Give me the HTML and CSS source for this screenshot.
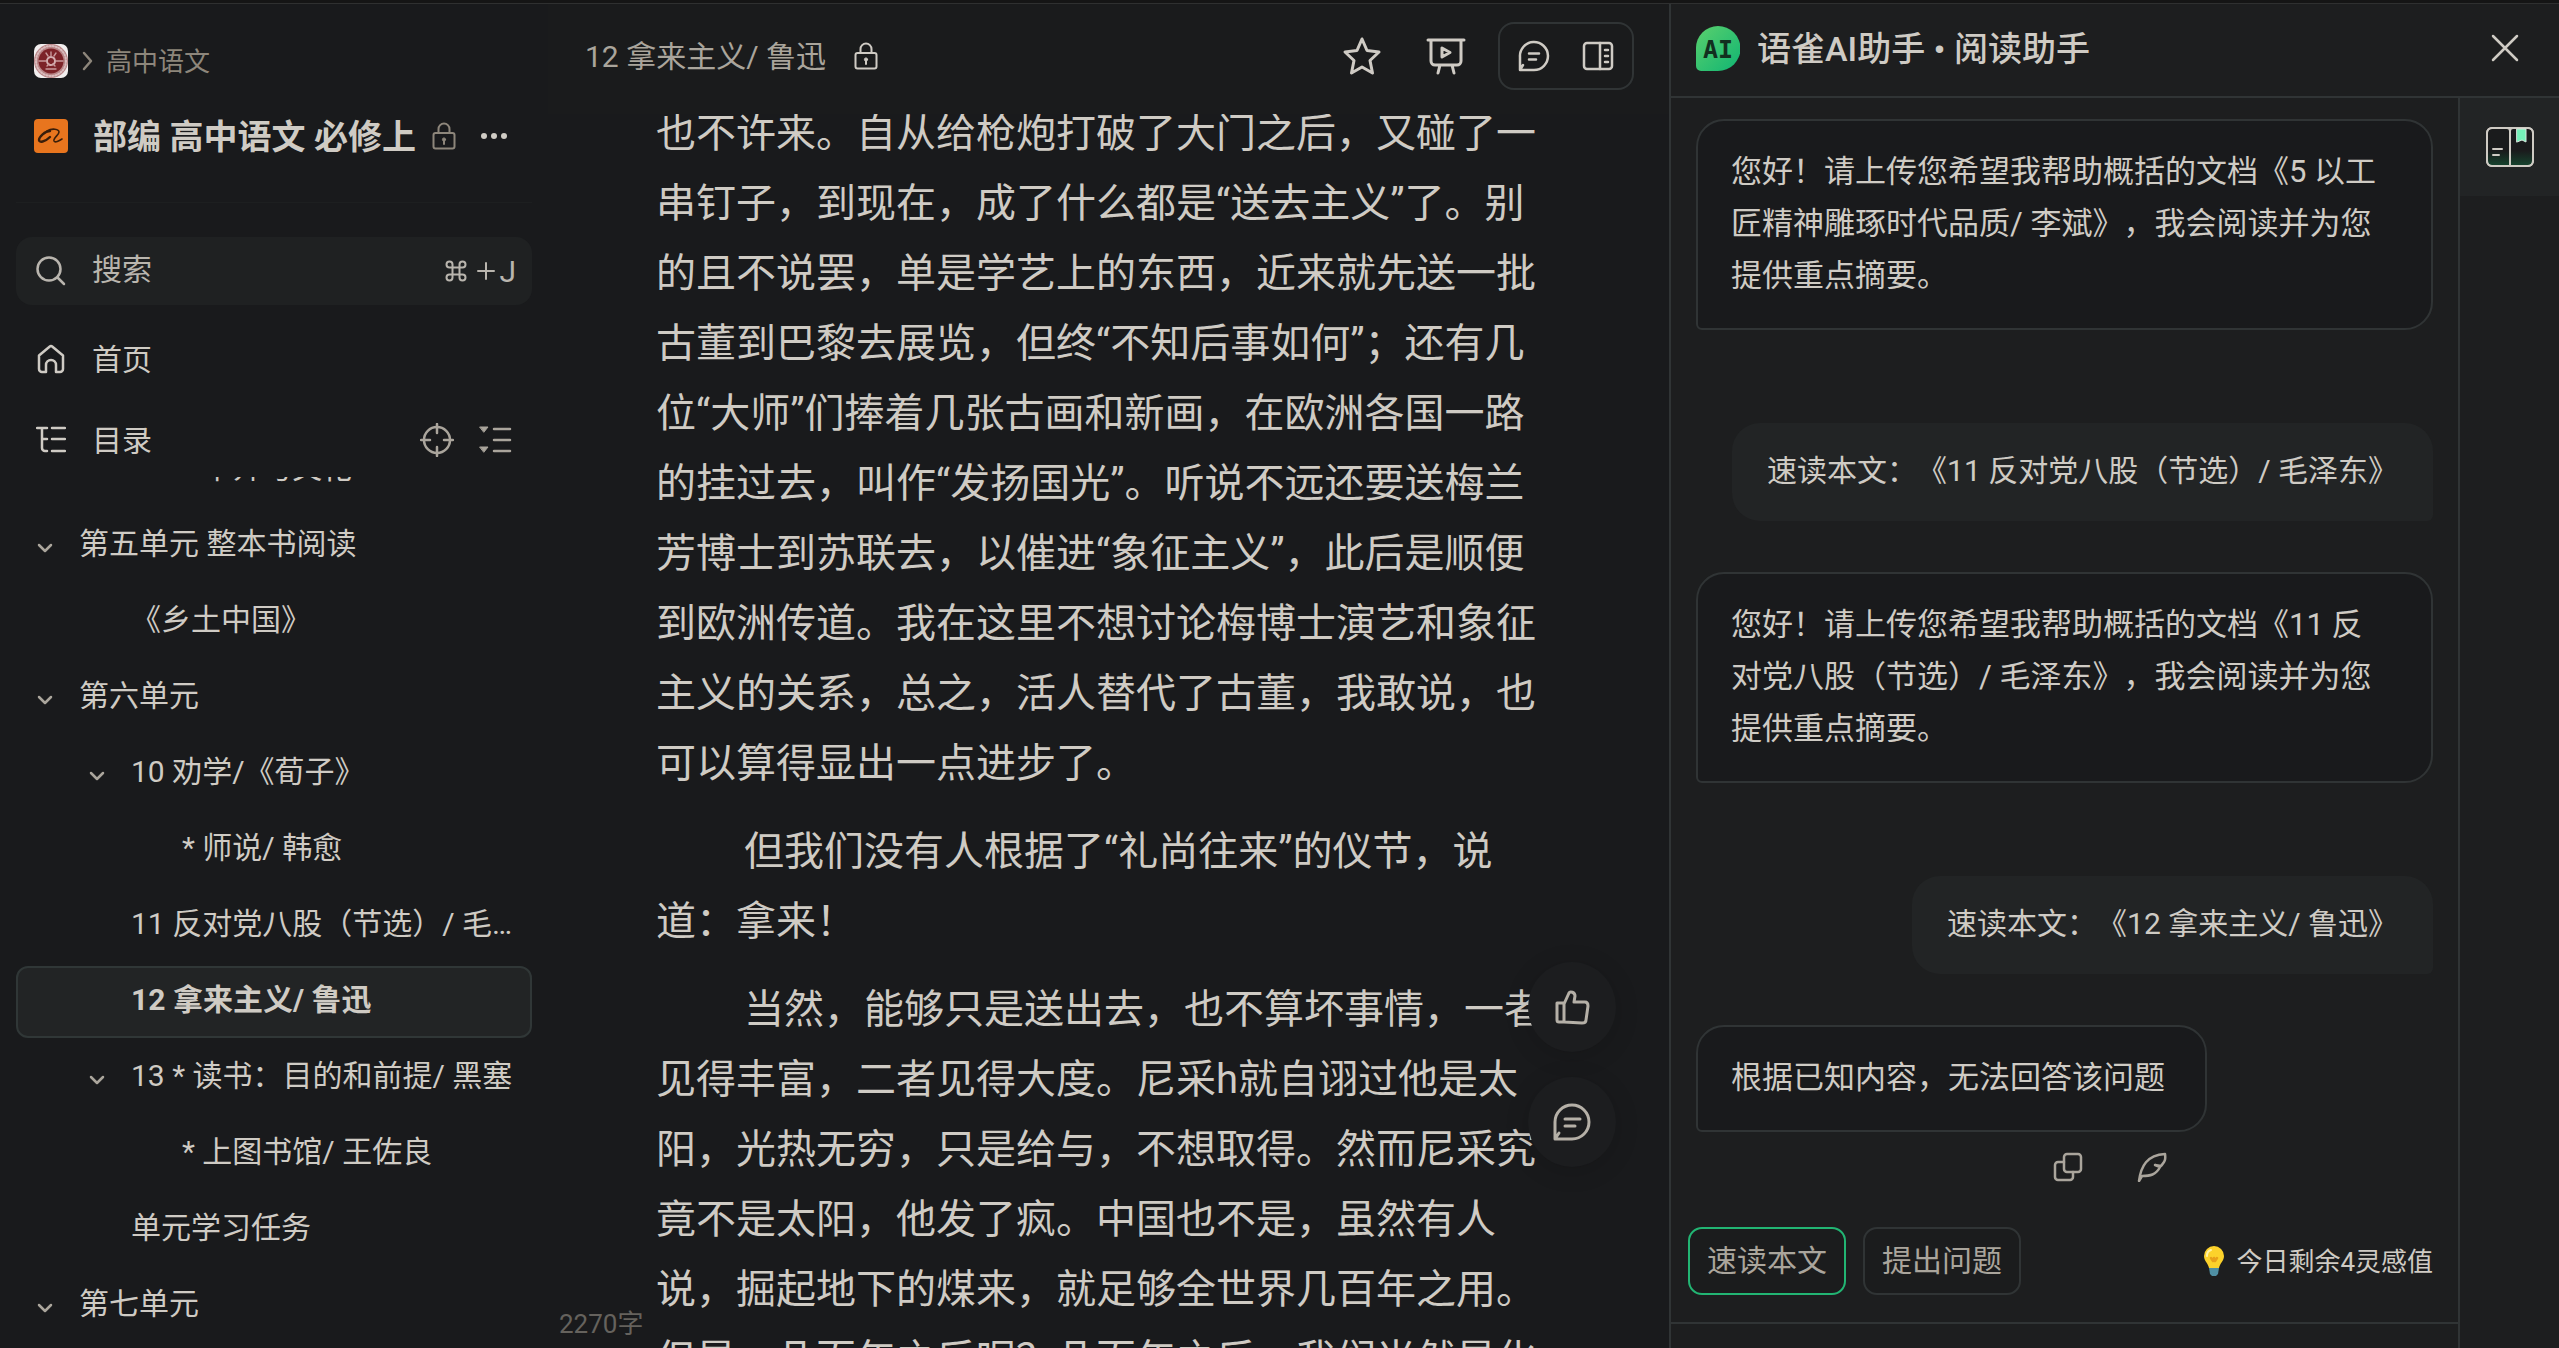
FILE: index.html
```html
<!DOCTYPE html>
<html lang="zh-CN">
<head>
  <meta charset="UTF-8">
  <title>12 拿来主义/ 鲁迅</title>
  <link rel="stylesheet" href="styles.css">
</head>
<body>
  <div class="window-edge"></div>
  <div class="app">

    <aside class="sidebar">
      <nav class="crumb">
        <svg class="avatar" viewBox="0 0 34 34">
          <rect width="34" height="34" rx="7" fill="#f1eeee"/>
          <circle cx="17" cy="17" r="17" fill="#b98587"/>
          <circle cx="17" cy="17" r="15" fill="none" stroke="#d9bcbd" stroke-width="2" stroke-dasharray="1 2"/>
          <circle cx="17" cy="17" r="12.500" fill="#7c2328"/>
          <circle cx="17" cy="17" r="4" fill="none" stroke="#d3adaf" stroke-width="2" stroke-dasharray="2 1"/>
          <path d="M5 17h7M22 17h7M12 9l2 3M17 8v4M22 9l-2 3M12 25h10M13 22l2-2M21 22l-2-2" stroke="#c99a9c" stroke-width="1.400" fill="none"/>
        </svg>
        <svg class="crumb-arrow" viewBox="0 0 12 20"><path d="M2 2l7 8-7 8"/></svg>
        <a href="#">高中语文</a>
      </nav>

      <div class="book">
        <svg class="book-logo" viewBox="0 0 34 34">
          <rect width="34" height="34" rx="4" fill="#e8751e"/>
          <path d="M16 12C11 12 5 18 5 21c0 3 6 2 11-3" fill="none" stroke="#3a1e0a" stroke-width="2.400" stroke-linecap="round"/>
          <path d="M13 12c5-3 12-2 12 1 0 3-6 6-5 9 1 2 5 0 8-2" fill="none" stroke="#3a1e0a" stroke-width="1.600" stroke-linecap="round"/>
        </svg>
        <a class="book-name" href="#">部编 高中语文 必修上</a>
        <svg class="lock" viewBox="0 0 24 28"><rect x="1.500" y="11" width="21" height="15.500" rx="2"/><path d="M6.500 11V7a5.500 5.500 0 0 1 11 0v4M12 18v4"/><circle class="fill" cx="12" cy="17.500" r="1.600"/></svg>
        <button class="icon-btn more" type="button" aria-label="更多">
          <svg viewBox="0 0 28 8"><circle cx="4" cy="4" r="3"/><circle cx="14" cy="4" r="3"/><circle cx="24" cy="4" r="3"/></svg>
        </button>
      </div>

      <label class="search">
        <svg viewBox="0 0 30 30"><circle cx="13" cy="13" r="11.500"/><path d="M21.500 21.500L28 28"/></svg>
        <input type="text" placeholder="搜索" aria-label="搜索">
        <svg class="cmd" viewBox="0 0 22 22"><path d="M7.500 7.500h7v7h-7zM7.500 7.500V4.500a3 3 0 1 0-3 3h3zM14.500 7.500h3a3 3 0 1 0-3-3v3zM14.500 14.500v3a3 3 0 1 0 3-3h-3zM7.500 14.500h-3a3 3 0 1 0 3 3v-3z"/></svg>
        <svg class="plus" viewBox="0 0 18 18"><path d="M9 1v16M1 9h16"/></svg>
        <kbd>J</kbd>
      </label>

      <a class="side-row" href="#">
        <svg viewBox="0 0 30 30"><path d="M3 11.500L13.500 2.700a2.300 2.300 0 0 1 3 0L27 11.500V25a3 3 0 0 1-3 3h-4v-7a5 5 0 0 0-10 0v7H6a3 3 0 0 1-3-3z"/></svg>
        <span>首页</span>
      </a>
      <div class="side-row toc-head">
        <svg viewBox="0 0 30 30"><path d="M1 3h10M16 3h13M6 3v20a3 3 0 0 0 3 3h2M6 14h5M16 14h13M16 26h13"/></svg>
        <span>目录</span>
        <button class="icon-btn" type="button" aria-label="定位">
          <svg viewBox="0 0 34 34"><circle cx="17" cy="17" r="13"/><path d="M17 1v9M17 24v9M1 17h9M24 17h9"/></svg>
        </button>
        <button class="icon-btn" type="button" aria-label="展开">
          <svg viewBox="0 0 34 34"><path d="M16 6h16M16 17h16M16 28h16"/><path class="fill" d="M2 4h8l-4 5zM2 24h8l-4 5z"/></svg>
        </button>
      </div>

      <div class="tree">
        <ul class="level-1">
          <li>
            <ul class="level-3">
              <li><a href="#">* 中介与文化</a></li>
            </ul>
          </li>
          <li>
            <a href="#"><svg class="caret" viewBox="0 0 16 10"><path d="M2 2l6 6 6-6"/></svg>第五单元 整本书阅读</a>
            <ul class="level-2">
              <li><a href="#">《乡土中国》</a></li>
            </ul>
          </li>
          <li>
            <a href="#"><svg class="caret" viewBox="0 0 16 10"><path d="M2 2l6 6 6-6"/></svg>第六单元</a>
            <ul class="level-2">
              <li>
                <a href="#"><svg class="caret" viewBox="0 0 16 10"><path d="M2 2l6 6 6-6"/></svg>10 劝学/《荀子》</a>
                <ul class="level-3">
                  <li><a href="#">* 师说/ 韩愈</a></li>
                </ul>
              </li>
              <li><a href="#">11 反对党八股（节选）/ 毛泽东</a></li>
              <li><a class="active" href="#">12 拿来主义/ 鲁迅</a></li>
              <li>
                <a href="#"><svg class="caret" viewBox="0 0 16 10"><path d="M2 2l6 6 6-6"/></svg>13 * 读书：目的和前提/ 黑塞</a>
                <ul class="level-3">
                  <li><a href="#">* 上图书馆/ 王佐良</a></li>
                </ul>
              </li>
              <li><a href="#">单元学习任务</a></li>
            </ul>
          </li>
          <li><a href="#"><svg class="caret" viewBox="0 0 16 10"><path d="M2 2l6 6 6-6"/></svg>第七单元</a></li>
        </ul>
      </div>
    </aside>

    <main class="doc">
      <header class="doc-header">
        <h1>12 拿来主义/ 鲁迅</h1>
        <svg class="lock" viewBox="0 0 24 28"><rect x="1.500" y="11" width="21" height="15.500" rx="2"/><path d="M6.500 11V7a5.500 5.500 0 0 1 11 0v4M12 18v4"/><circle class="fill" cx="12" cy="17.500" r="1.600"/></svg>
        <div class="doc-tools">
          <button class="icon-btn" type="button" aria-label="收藏">
            <svg viewBox="0 0 40 40"><path d="M20 3l5 11.500 12 1.500-9 8.500 2.500 12.500L20 31 9.500 37 12 24.500 3 16l12-1.500z"/></svg>
          </button>
          <button class="icon-btn" type="button" aria-label="演示">
            <svg viewBox="0 0 40 40"><path d="M2 4h36M5 4v21a4 4 0 0 0 4 4h22a4 4 0 0 0 4-4V4M14 29l-2 8M26 29l2 8M16 12v9l8-4.500z"/></svg>
          </button>
          <div class="tool-group">
            <button class="icon-btn" type="button" aria-label="评论">
              <svg viewBox="0 0 32 32"><path d="M2 30V17A14 14 0 1 1 16 30H2l3-5M11 13.500h10M11 19.500h7"/></svg>
            </button>
            <button class="icon-btn" type="button" aria-label="侧栏">
              <svg viewBox="0 0 32 32"><rect x="2" y="3" width="28" height="26" rx="3"/><path d="M18 3v26M23 10h3M23 16h3M23 22h3"/></svg>
            </button>
          </div>
        </div>
      </header>

      <div class="doc-body">
        <article class="prose">
          <p>也不许来。自从给枪炮打破了大门之后，又碰了一串钉子，到现在，成了什么都是“送去主义”了。别的且不说罢，单是学艺上的东西，近来就先送一批古董到巴黎去展览，但终“不知后事如何”；还有几位“大师”们捧着几张古画和新画，在欧洲各国一路的挂过去，叫作“发扬国光”。听说不远还要送梅兰芳博士到苏联去，以催进“象征主义”，此后是顺便到欧洲传道。我在这里不想讨论梅博士演艺和象征主义的关系，总之，活人替代了古董，我敢说，也可以算得显出一点进步了。</p>
          <p class="indent">但我们没有人根据了“礼尚往来”的仪节，说道：拿来！</p>
          <p class="indent">当然，能够只是送出去，也不算坏事情，一者见得丰富，二者见得大度。尼采h就自诩过他是太阳，光热无穷，只是给与，不想取得。然而尼采究竟不是太阳，他发了疯。中国也不是，虽然有人说，掘起地下的煤来，就足够全世界几百年之用。但是，几百年之后呢？几百年之后，我们当然是化</p>
        </article>
        <div class="float-tools">
          <button class="float-btn" type="button" aria-label="点赞">
            <svg viewBox="0 0 38 38"><path d="M4 15h7v19H6a2 2 0 0 1-2-2zM11 16l5-11c1-2 6-1 6 3l-1 6h11c2 0 3 2 3 4l-2 14c0 2-2 3-4 3l-18-1"/></svg>
          </button>
          <button class="float-btn" type="button" aria-label="评论">
            <svg viewBox="0 0 38 38"><path d="M2 36V19A17 17 0 1 1 19 36H2l4-6M12 16h15M12 23h10"/></svg>
          </button>
        </div>
        <div class="word-count">2270字</div>
      </div>
    </main>

    <section class="assistant">
      <header class="assistant-header">
        <svg class="ai-logo" viewBox="0 0 44 45">
          <defs><linearGradient id="ai" x1="0" y1="0" x2="1" y2="1"><stop offset="0" stop-color="#5bd06d"/><stop offset="1" stop-color="#10b573"/></linearGradient></defs>
          <path d="M22 0a22 22 0 0 1 0 45H5a5 5 0 0 1-5-5V22A22 22 0 0 1 22 0z" fill="url(#ai)"/>
          <text x="22" y="32">AI</text>
        </svg>
        <h2>语雀AI助手 • 阅读助手</h2>
        <button class="icon-btn close" type="button" aria-label="关闭">
          <svg viewBox="0 0 28 28"><path d="M2 2l24 24M26 2L2 26"/></svg>
        </button>
      </header>

      <div class="assistant-main">
        <div class="chat">
          <div class="messages">
            <div class="msg bot">您好！请上传您希望我帮助概括的文档《5 以工匠精神雕琢时代品质/ 李斌》，我会阅读并为您提供重点摘要。</div>
            <div class="msg user">速读本文：《11 反对党八股（节选）/ 毛泽东》</div>
            <div class="msg bot">您好！请上传您希望我帮助概括的文档《11 反对党八股（节选）/ 毛泽东》，我会阅读并为您提供重点摘要。</div>
            <div class="msg user">速读本文：《12 拿来主义/ 鲁迅》</div>
            <div class="answer">
              <div class="msg bot">根据已知内容，无法回答该问题</div>
              <div class="msg-actions">
                <button class="icon-btn" type="button" aria-label="复制">
                  <svg viewBox="0 0 30 30"><rect x="11" y="2" width="17" height="18" rx="3"/><path d="M11 10H5a3 3 0 0 0-3 3v12a3 3 0 0 0 3 3h12a3 3 0 0 0 3-3v-5"/></svg>
                </button>
                <button class="icon-btn" type="button" aria-label="插入">
                  <svg viewBox="0 0 30 30"><path d="M2 29C4 14 10 3 28 2c1 7-1 8-4 12l-6-1 5 2c-4 8-10 9-18 9z"/></svg>
                </button>
              </div>
            </div>
          </div>
          <div class="prompt-bar">
            <button class="prompt selected" type="button">速读本文</button>
            <button class="prompt" type="button">提出问题</button>
            <div class="quota">
              <svg viewBox="0 0 20 30">
                <path d="M10 0a10 10 0 0 1 10 10c0 5-4 7-5 12H5C4 17 0 15 0 10A10 10 0 0 1 10 0z" fill="#fcd22b"/>
                <path d="M7 4a6 6 0 0 0-4 6" stroke="#fff3a8" stroke-width="2" fill="none"/>
                <path d="M7 12l2 3 1-3 1 3 2-3" stroke="#e8a11a" fill="none"/>
                <path d="M5 22h10l-1 6-2 2H8l-2-2z" fill="#4f8fa3"/>
              </svg>
              <span>今日剩余4灵感值</span>
            </div>
          </div>
        </div>
        <nav class="rail">
          <button class="rail-tab" type="button" aria-label="阅读助手">
            <svg viewBox="0 0 48 40">
              <defs><linearGradient id="book" x1="0" y1="0" x2="0" y2="1"><stop offset="0.600" stop-color="#1a1b1c"/><stop offset="1" stop-color="#16452f"/></linearGradient></defs>
              <rect x="1" y="1" width="46" height="38" rx="5" fill="url(#book)"/>
              <path d="M6 1h15a3 3 0 0 1 3 3 3 3 0 0 1 3-3h15a5 5 0 0 1 5 5v28a5 5 0 0 1-5 5H6a5 5 0 0 1-5-5V6a5 5 0 0 1 5-5zM24 4v35"/>
              <path d="M7 22h9M7 28h6"/>
              <path class="mark" d="M31 2h9v13l-4-2-5 2z"/>
            </svg>
          </button>
        </nav>
      </div>
    </section>
  </div>
</body>
</html>
```

FILE: styles.css
```css
:root {
  --bg: #191a1c;
  --panel: #1d1e1f;
  --raised: #222425;
  --field: #1f2122;
  --line: #303435;
  --text: #cfcbc4;
  --muted: #aaa59c;
  --dim: #8d867b;
  --green: #22b573;
}

* {
  box-sizing: border-box;
}

body {
  margin: 0;
  height: 100vh;
  display: flex;
  flex-direction: column;
  overflow: hidden;
  background: var(--bg);
  color: var(--text);
  font-family: Roboto, "Noto Sans CJK SC", sans-serif;
  font-size: 30px;
  text-spacing-trim: space-all;
}

button,
input,
kbd {
  font: inherit;
  color: inherit;
}

a {
  color: inherit;
  text-decoration: none;
}

ul {
  list-style: none;
  margin: 0;
  padding: 0;
}

svg {
  display: block;
  flex: none;
  fill: none;
  stroke: currentColor;
  stroke-width: 2.5;
  stroke-linecap: round;
  stroke-linejoin: round;
}

svg .fill {
  fill: currentColor;
  stroke-width: 1;
}

.icon-btn {
  padding: 0;
  border: none;
  background: none;
  cursor: pointer;
}

.window-edge {
  flex: none;
  height: 4px;
  background: #151515;
  border-bottom: 1px solid #2f3030;
}

.app {
  flex: 1;
  min-height: 0;
  display: grid;
  grid-template-columns: 548px 1fr 890px;
}

.lock {
  width: 24px;
  height: 28px;
  stroke-width: 2;
}

/* labels sit slightly above the middle of their icons */
.crumb a,
.book-name,
.search input,
.side-row > span,
.doc-header h1,
.assistant-header h2,
.quota span {
  padding: 0 0 4px;
}

/* sidebar */

.sidebar {
  display: flex;
  flex-direction: column;
  min-height: 0;
  padding: 38px 16px 0;
}

.crumb {
  display: flex;
  align-items: center;
  height: 38px;
  padding: 0 18px;
  font-size: 26px;
  color: var(--dim);
}

.avatar,
.book-logo {
  width: 34px;
  height: 34px;
  stroke: none;
}

.crumb-arrow {
  width: 12px;
  height: 20px;
  margin: 0 12px 0 14px;
}

.book {
  display: flex;
  align-items: center;
  height: 97px;
  margin-top: 26px;
  padding: 0 18px 36px;
  border-bottom: 1px solid #1d1f20;
}

.book-name {
  margin: 0 16px 0 25px;
  font-size: 34px;
  font-weight: 700;
}

.book .lock {
  color: var(--dim);
}

.more {
  margin-left: 24px;
}

.more svg {
  width: 28px;
  height: 8px;
  fill: currentColor;
  stroke: none;
}

.search {
  display: flex;
  align-items: center;
  height: 68px;
  margin-top: 34px;
  padding: 0 16px 0 20px;
  border-radius: 16px;
  background: var(--field);
  color: #b9b5ae;
}

.search svg {
  width: 30px;
  height: 30px;
}

.search .cmd {
  width: 22px;
  height: 22px;
  stroke-width: 2;
}

.search .plus {
  width: 18px;
  height: 18px;
  margin: 0 4px 0 10px;
  stroke-width: 2;
}

.search input {
  flex: 1;
  min-width: 0;
  margin-left: 26px;
  border: none;
  outline: none;
  background: none;
}

.search input::placeholder {
  color: inherit;
  opacity: 1;
}

.side-row {
  display: flex;
  align-items: center;
  height: 72px;
  margin-top: 18px;
  padding: 0 20px;
}

.side-row > span {
  flex: 1;
  margin-left: 26px;
}

.side-row svg {
  width: 30px;
  height: 30px;
}

.toc-head {
  margin-top: 9px;
}

.toc-head .icon-btn {
  margin-left: 24px;
  color: var(--muted);
}

.toc-head .icon-btn svg {
  width: 34px;
  height: 34px;
}

.tree {
  flex: 1;
  min-height: 0;
  margin-top: 1px;
  overflow: hidden;
}

.level-1 {
  --indent: 61px;
  margin-top: -43px;
}

.level-2 {
  --indent: 113px;
}

.level-2 > li {
  margin-bottom: 1px;
}

.level-3 {
  --indent: 164px;
}

.tree a {
  position: relative;
  display: block;
  height: 72px;
  margin-bottom: 4px;
  padding: 0 16px 0 var(--indent);
  border: 2px solid transparent;
  border-radius: 12px;
  line-height: 64px;
  white-space: nowrap;
  overflow: hidden;
  text-overflow: ellipsis;
}

.tree .active {
  border-color: #303737;
  background: var(--raised);
  font-weight: 700;
}

.caret {
  position: absolute;
  top: 31px;
  left: calc(var(--indent) - 42px);
  width: 16px;
  height: 10px;
  color: var(--muted);
}

/* document */

.doc {
  display: flex;
  flex-direction: column;
  min-width: 0;
  min-height: 0;
}

.doc-header {
  display: flex;
  align-items: center;
  height: 110px;
  padding: 0 35px 6px 37px;
  background: #1a1b1c;
}

.doc-header h1 {
  margin: 0 28px 0 0;
  font-size: 30px;
  font-weight: 400;
  color: var(--muted);
}

.doc-tools {
  display: flex;
  align-items: center;
  gap: 44px;
  margin-left: auto;
}

.doc-tools svg {
  width: 40px;
  height: 40px;
  stroke-width: 3;
}

.tool-group {
  display: flex;
  align-items: center;
  gap: 32px;
  height: 68px;
  margin-left: -12px;
  padding: 0 18px;
  border: 2px solid var(--line);
  border-radius: 16px;
}

.tool-group svg {
  width: 32px;
  height: 32px;
  stroke-width: 2.5;
}

.doc-body {
  position: relative;
  flex: 1;
  min-height: 0;
  overflow: hidden;
}

.prose {
  width: 890px;
  margin: -15px auto 0 108px;
  font-size: 40px;
  line-height: 70px;
}

.prose p {
  margin: 0 0 18px;
}

.prose .indent {
  text-indent: 88px;
}

.float-tools {
  position: absolute;
  right: 53px;
  bottom: 181px;
  display: flex;
  flex-direction: column;
  gap: 25px;
}

.float-btn {
  display: grid;
  place-items: center;
  width: 88px;
  height: 90px;
  padding: 0;
  border: none;
  border-radius: 50%;
  background: #1c1d1f;
  color: #b5b0a7;
  box-shadow: 0 4px 24px rgba(0, 0, 0, 0.15);
  cursor: pointer;
}

.float-btn svg {
  width: 38px;
  height: 38px;
  stroke-width: 3;
}

.word-count {
  position: absolute;
  left: 11px;
  bottom: 8px;
  font-size: 26px;
  line-height: 32px;
  color: #65625d;
}

/* assistant */

.assistant {
  display: flex;
  flex-direction: column;
  min-height: 0;
  border-left: 2px solid var(--line);
  background: var(--panel);
}

.assistant-header {
  display: flex;
  align-items: center;
  height: 94px;
  padding: 0 40px 4px 25px;
  border-bottom: 2px solid var(--line);
}

.ai-logo {
  width: 44px;
  height: 45px;
  stroke: none;
}

.ai-logo text {
  fill: #12301f;
  font-family: "DejaVu Sans Mono", monospace;
  font-size: 25px;
  font-weight: 700;
  text-anchor: middle;
}

.assistant-header h2 {
  margin: 0 auto 0 17px;
  font-size: 34px;
  font-weight: 500;
}

.close svg {
  width: 28px;
  height: 28px;
}

.assistant-main {
  flex: 1;
  min-height: 0;
  display: grid;
  grid-template-columns: 1fr 101px;
}

.chat {
  display: flex;
  flex-direction: column;
  min-height: 0;
}

.messages {
  flex: 1;
  min-height: 0;
  display: flex;
  flex-direction: column;
  align-items: flex-start;
  padding: 21px 25px 0;
}

.msg {
  line-height: 52px;
}

.msg.bot {
  padding: 25px 40px 26px 33px;
  border: 2px solid var(--line);
  border-radius: 28px 28px 28px 6px;
  background: var(--bg);
  font-size: 31px;
}

.msg.user {
  align-self: flex-end;
  margin: 93px 0 51px;
  padding: 22px 35px 24px;
  border-radius: 28px 28px 6px 28px;
  background: var(--raised);
}

.msg-actions {
  display: flex;
  justify-content: flex-end;
  gap: 54px;
  margin-top: 20px;
  padding-right: 40px;
  color: var(--muted);
}

.msg-actions svg {
  width: 30px;
  height: 30px;
}

.prompt-bar {
  display: flex;
  align-items: center;
  gap: 17px;
  padding: 0 25px 27px 17px;
  border-bottom: 2px solid var(--line);
  margin-bottom: 24px;
}

.prompt {
  height: 68px;
  padding: 0 17px 6px;
  border: 2px solid var(--line);
  border-radius: 14px;
  background: #1b1c1d;
  color: var(--muted);
  cursor: pointer;
}

.prompt.selected {
  border-color: var(--green);
}

.quota {
  display: flex;
  align-items: center;
  gap: 12px;
  margin-left: auto;
  font-size: 26px;
}

.quota svg {
  width: 20px;
  height: 30px;
  stroke: none;
}

.rail {
  border-left: 2px solid var(--line);
}

.rail-tab {
  display: grid;
  place-items: center;
  width: 100%;
  height: 98px;
  padding: 0;
  border: none;
  background: var(--raised);
  cursor: pointer;
}

.rail-tab svg {
  width: 48px;
  height: 40px;
  stroke-width: 2;
}

.rail-tab .mark {
  fill: #74f0b8;
  stroke: #d8e8df;
  stroke-width: 1;
}
```
